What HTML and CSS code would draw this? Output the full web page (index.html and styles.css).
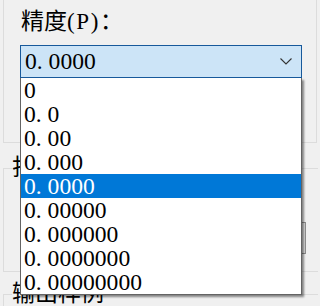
FILE: index.html
```html
<!DOCTYPE html>
<html lang="zh-CN">
<head>
<meta charset="utf-8">
<title>精度</title>
<link rel="stylesheet" href="styles.css">
</head>
<body>
<div class="page">
  <div class="box1">
    <div class="label">精度<span class="latin">(P)</span>：</div>
    <div class="combo-wrap">
      <div class="combo">
        <span class="value">0<span class="dot">.</span>0000</span>
        <svg class="chev" width="12" height="7" viewBox="0 0 12 7"><polyline points="0.5,0.5 6,6 11.5,0.5" fill="none" stroke="#333" stroke-width="1.1"/></svg>
      </div>
      <ul class="list">
        <li>0</li>
        <li>0<span class="dot">.</span>0</li>
        <li>0<span class="dot">.</span>00</li>
        <li>0<span class="dot">.</span>000</li>
        <li class="sel">0<span class="dot">.</span>0000</li>
        <li>0<span class="dot">.</span>00000</li>
        <li>0<span class="dot">.</span>000000</li>
        <li>0<span class="dot">.</span>0000000</li>
        <li>0<span class="dot">.</span>00000000</li>
      </ul>
    </div>
  </div>
  <fieldset class="group g2">
    <legend>打印设置</legend>
    <div class="g2-body">
      <div class="button"></div>
    </div>
  </fieldset>
  <fieldset class="group g3">
    <legend>输出样例</legend>
    <div class="g3-body"></div>
  </fieldset>
</div>
</body>
</html>
```
FILE: styles.css
```css
html, body {
  margin: 0;
  padding: 0;
  overflow: hidden;
  background: #f0f0f0;
}
body {
  width: 318px;
  height: 306px;
  font-family: "Liberation Serif", "Noto Sans CJK SC", serif;
  font-size: 23px;
  color: #000;
}
.page {
  width: 318px;
  height: 306px;
  overflow: hidden;
}
.box1 {
  margin-left: 3px;
  width: 312px;
  height: 142px;
  border: 1px solid #dcdcdc;
  border-top: none;
}
.label {
  padding: 7px 0 0 17px;
  line-height: 30px;
  white-space: nowrap;
}
.latin {
  letter-spacing: 1.6px;
}
.combo-wrap {
  position: relative;
  margin: 8px 0 0 16px;
  width: 282px;
  font-size: 23.6px;
}
.combo {
  box-sizing: border-box;
  height: 33px;
  border: 1px solid #17599b;
  background: #cce4f7;
  display: flex;
  align-items: center;
  justify-content: space-between;
  padding: 0 9px 0 4px;
  line-height: 31px;
}
.chev {
  display: block;
}
.dot {
  display: inline-block;
  width: 0.5em;
}
.list {
  position: absolute;
  top: 100%;
  left: 0;
  z-index: 5;
  box-sizing: border-box;
  width: 282px;
  margin: 0;
  padding: 0;
  list-style: none;
  background: #fff;
  border: 1px solid #646464;
  border-top: none;
  box-shadow: 2px 2px 2px rgba(0, 0, 0, 0.45);
}
.list li {
  height: 24px;
  line-height: 24px;
  padding-left: 3px;
  white-space: nowrap;
}
.list li.sel {
  background: #0078d7;
  color: #fff;
}
.group {
  margin: 0 0 0 3px;
  padding: 0;
  width: 340px;
  border: 1px solid #dcdcdc;
  min-width: 0;
}
.group legend {
  padding: 0;
  margin-left: 8px;
  line-height: 24px;
  font-size: 23px;
  white-space: nowrap;
}
.g2 {
  margin-top: 13px;
}
.g2-body {
  padding: 42px 0 17px 16px;
}
.button {
  box-sizing: border-box;
  width: 286px;
  height: 32px;
  border: 1px solid #8f8f8f;
  background: #e1e1e1;
}
.g3 {
  margin-top: 10px;
}
.g3-body {
  height: 40px;
}
```
